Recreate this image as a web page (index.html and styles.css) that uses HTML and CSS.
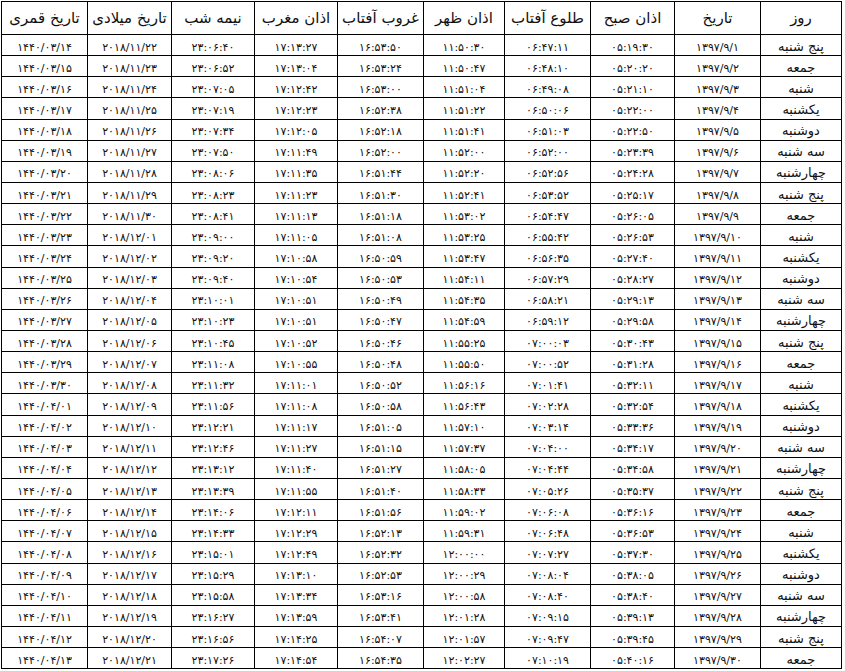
FILE: index.html
```html
<!DOCTYPE html>
<html lang="fa">
<head>
<meta charset="utf-8">
<title>اوقات شرعی</title>
<link rel="stylesheet" href="styles.css">
</head>
<body>
<table class="times" dir="rtl">
<colgroup>
<col class="c81"><col class="c86"><col class="c84"><col class="c86"><col class="c81"><col class="c86"><col class="c83"><col class="c83"><col class="c84"><col class="c86">
</colgroup>
<thead>
<tr class="head"><th>روز</th><th>تاریخ</th><th>اذان صبح</th><th>طلوع آفتاب</th><th>اذان ظهر</th><th>غروب آفتاب</th><th>اذان مغرب</th><th>نیمه شب</th><th>تاریخ میلادی</th><th>تاریخ قمری</th></tr>
</thead>
<tbody>
<tr><td class="day">پنج شنبه</td><td>۱۳۹۷/۹/۱</td><td>۰۵:۱۹:۳۰</td><td>۰۶:۴۷:۱۱</td><td>۱۱:۵۰:۳۰</td><td>۱۶:۵۳:۵۰</td><td>۱۷:۱۳:۲۷</td><td>۲۳:۰۶:۴۰</td><td>۲۰۱۸/۱۱/۲۲</td><td>۱۴۴۰/۰۳/۱۴</td></tr>
<tr><td class="day">جمعه</td><td>۱۳۹۷/۹/۲</td><td>۰۵:۲۰:۲۰</td><td>۰۶:۴۸:۱۰</td><td>۱۱:۵۰:۴۷</td><td>۱۶:۵۳:۲۴</td><td>۱۷:۱۳:۰۴</td><td>۲۳:۰۶:۵۲</td><td>۲۰۱۸/۱۱/۲۳</td><td>۱۴۴۰/۰۳/۱۵</td></tr>
<tr><td class="day">شنبه</td><td>۱۳۹۷/۹/۳</td><td>۰۵:۲۱:۱۰</td><td>۰۶:۴۹:۰۸</td><td>۱۱:۵۱:۰۴</td><td>۱۶:۵۳:۰۰</td><td>۱۷:۱۲:۴۲</td><td>۲۳:۰۷:۰۵</td><td>۲۰۱۸/۱۱/۲۴</td><td>۱۴۴۰/۰۳/۱۶</td></tr>
<tr><td class="day">یکشنبه</td><td>۱۳۹۷/۹/۴</td><td>۰۵:۲۲:۰۰</td><td>۰۶:۵۰:۰۶</td><td>۱۱:۵۱:۲۲</td><td>۱۶:۵۲:۳۸</td><td>۱۷:۱۲:۲۳</td><td>۲۳:۰۷:۱۹</td><td>۲۰۱۸/۱۱/۲۵</td><td>۱۴۴۰/۰۳/۱۷</td></tr>
<tr><td class="day">دوشنبه</td><td>۱۳۹۷/۹/۵</td><td>۰۵:۲۲:۵۰</td><td>۰۶:۵۱:۰۳</td><td>۱۱:۵۱:۴۱</td><td>۱۶:۵۲:۱۸</td><td>۱۷:۱۲:۰۵</td><td>۲۳:۰۷:۳۴</td><td>۲۰۱۸/۱۱/۲۶</td><td>۱۴۴۰/۰۳/۱۸</td></tr>
<tr><td class="day">سه شنبه</td><td>۱۳۹۷/۹/۶</td><td>۰۵:۲۳:۳۹</td><td>۰۶:۵۲:۰۰</td><td>۱۱:۵۲:۰۰</td><td>۱۶:۵۲:۰۰</td><td>۱۷:۱۱:۴۹</td><td>۲۳:۰۷:۵۰</td><td>۲۰۱۸/۱۱/۲۷</td><td>۱۴۴۰/۰۳/۱۹</td></tr>
<tr><td class="day">چهارشنبه</td><td>۱۳۹۷/۹/۷</td><td>۰۵:۲۴:۲۸</td><td>۰۶:۵۲:۵۶</td><td>۱۱:۵۲:۲۰</td><td>۱۶:۵۱:۴۴</td><td>۱۷:۱۱:۳۵</td><td>۲۳:۰۸:۰۶</td><td>۲۰۱۸/۱۱/۲۸</td><td>۱۴۴۰/۰۳/۲۰</td></tr>
<tr><td class="day">پنج شنبه</td><td>۱۳۹۷/۹/۸</td><td>۰۵:۲۵:۱۷</td><td>۰۶:۵۳:۵۲</td><td>۱۱:۵۲:۴۱</td><td>۱۶:۵۱:۳۰</td><td>۱۷:۱۱:۲۳</td><td>۲۳:۰۸:۲۳</td><td>۲۰۱۸/۱۱/۲۹</td><td>۱۴۴۰/۰۳/۲۱</td></tr>
<tr><td class="day">جمعه</td><td>۱۳۹۷/۹/۹</td><td>۰۵:۲۶:۰۵</td><td>۰۶:۵۴:۴۷</td><td>۱۱:۵۳:۰۲</td><td>۱۶:۵۱:۱۸</td><td>۱۷:۱۱:۱۳</td><td>۲۳:۰۸:۴۱</td><td>۲۰۱۸/۱۱/۳۰</td><td>۱۴۴۰/۰۳/۲۲</td></tr>
<tr><td class="day">شنبه</td><td>۱۳۹۷/۹/۱۰</td><td>۰۵:۲۶:۵۳</td><td>۰۶:۵۵:۴۲</td><td>۱۱:۵۳:۲۵</td><td>۱۶:۵۱:۰۸</td><td>۱۷:۱۱:۰۵</td><td>۲۳:۰۹:۰۰</td><td>۲۰۱۸/۱۲/۰۱</td><td>۱۴۴۰/۰۳/۲۳</td></tr>
<tr><td class="day">یکشنبه</td><td>۱۳۹۷/۹/۱۱</td><td>۰۵:۲۷:۴۰</td><td>۰۶:۵۶:۳۵</td><td>۱۱:۵۳:۴۷</td><td>۱۶:۵۰:۵۹</td><td>۱۷:۱۰:۵۸</td><td>۲۳:۰۹:۲۰</td><td>۲۰۱۸/۱۲/۰۲</td><td>۱۴۴۰/۰۳/۲۴</td></tr>
<tr><td class="day">دوشنبه</td><td>۱۳۹۷/۹/۱۲</td><td>۰۵:۲۸:۲۷</td><td>۰۶:۵۷:۲۹</td><td>۱۱:۵۴:۱۱</td><td>۱۶:۵۰:۵۳</td><td>۱۷:۱۰:۵۴</td><td>۲۳:۰۹:۴۰</td><td>۲۰۱۸/۱۲/۰۳</td><td>۱۴۴۰/۰۳/۲۵</td></tr>
<tr><td class="day">سه شنبه</td><td>۱۳۹۷/۹/۱۳</td><td>۰۵:۲۹:۱۳</td><td>۰۶:۵۸:۲۱</td><td>۱۱:۵۴:۳۵</td><td>۱۶:۵۰:۴۹</td><td>۱۷:۱۰:۵۱</td><td>۲۳:۱۰:۰۱</td><td>۲۰۱۸/۱۲/۰۴</td><td>۱۴۴۰/۰۳/۲۶</td></tr>
<tr><td class="day">چهارشنبه</td><td>۱۳۹۷/۹/۱۴</td><td>۰۵:۲۹:۵۸</td><td>۰۶:۵۹:۱۲</td><td>۱۱:۵۴:۵۹</td><td>۱۶:۵۰:۴۷</td><td>۱۷:۱۰:۵۱</td><td>۲۳:۱۰:۲۳</td><td>۲۰۱۸/۱۲/۰۵</td><td>۱۴۴۰/۰۳/۲۷</td></tr>
<tr><td class="day">پنج شنبه</td><td>۱۳۹۷/۹/۱۵</td><td>۰۵:۳۰:۴۳</td><td>۰۷:۰۰:۰۳</td><td>۱۱:۵۵:۲۵</td><td>۱۶:۵۰:۴۶</td><td>۱۷:۱۰:۵۲</td><td>۲۳:۱۰:۴۵</td><td>۲۰۱۸/۱۲/۰۶</td><td>۱۴۴۰/۰۳/۲۸</td></tr>
<tr><td class="day">جمعه</td><td>۱۳۹۷/۹/۱۶</td><td>۰۵:۳۱:۲۸</td><td>۰۷:۰۰:۵۲</td><td>۱۱:۵۵:۵۰</td><td>۱۶:۵۰:۴۸</td><td>۱۷:۱۰:۵۵</td><td>۲۳:۱۱:۰۸</td><td>۲۰۱۸/۱۲/۰۷</td><td>۱۴۴۰/۰۳/۲۹</td></tr>
<tr><td class="day">شنبه</td><td>۱۳۹۷/۹/۱۷</td><td>۰۵:۳۲:۱۱</td><td>۰۷:۰۱:۴۱</td><td>۱۱:۵۶:۱۶</td><td>۱۶:۵۰:۵۲</td><td>۱۷:۱۱:۰۱</td><td>۲۳:۱۱:۳۲</td><td>۲۰۱۸/۱۲/۰۸</td><td>۱۴۴۰/۰۳/۳۰</td></tr>
<tr><td class="day">یکشنبه</td><td>۱۳۹۷/۹/۱۸</td><td>۰۵:۳۲:۵۴</td><td>۰۷:۰۲:۲۸</td><td>۱۱:۵۶:۴۳</td><td>۱۶:۵۰:۵۸</td><td>۱۷:۱۱:۰۸</td><td>۲۳:۱۱:۵۶</td><td>۲۰۱۸/۱۲/۰۹</td><td>۱۴۴۰/۰۴/۰۱</td></tr>
<tr><td class="day">دوشنبه</td><td>۱۳۹۷/۹/۱۹</td><td>۰۵:۳۳:۳۶</td><td>۰۷:۰۳:۱۴</td><td>۱۱:۵۷:۱۰</td><td>۱۶:۵۱:۰۵</td><td>۱۷:۱۱:۱۷</td><td>۲۳:۱۲:۲۱</td><td>۲۰۱۸/۱۲/۱۰</td><td>۱۴۴۰/۰۴/۰۲</td></tr>
<tr><td class="day">سه شنبه</td><td>۱۳۹۷/۹/۲۰</td><td>۰۵:۳۴:۱۷</td><td>۰۷:۰۴:۰۰</td><td>۱۱:۵۷:۳۷</td><td>۱۶:۵۱:۱۵</td><td>۱۷:۱۱:۲۷</td><td>۲۳:۱۲:۴۶</td><td>۲۰۱۸/۱۲/۱۱</td><td>۱۴۴۰/۰۴/۰۳</td></tr>
<tr><td class="day">چهارشنبه</td><td>۱۳۹۷/۹/۲۱</td><td>۰۵:۳۴:۵۸</td><td>۰۷:۰۴:۴۴</td><td>۱۱:۵۸:۰۵</td><td>۱۶:۵۱:۲۷</td><td>۱۷:۱۱:۴۰</td><td>۲۳:۱۳:۱۲</td><td>۲۰۱۸/۱۲/۱۲</td><td>۱۴۴۰/۰۴/۰۴</td></tr>
<tr><td class="day">پنج شنبه</td><td>۱۳۹۷/۹/۲۲</td><td>۰۵:۳۵:۳۷</td><td>۰۷:۰۵:۲۶</td><td>۱۱:۵۸:۳۳</td><td>۱۶:۵۱:۴۰</td><td>۱۷:۱۱:۵۵</td><td>۲۳:۱۳:۳۹</td><td>۲۰۱۸/۱۲/۱۳</td><td>۱۴۴۰/۰۴/۰۵</td></tr>
<tr><td class="day">جمعه</td><td>۱۳۹۷/۹/۲۳</td><td>۰۵:۳۶:۱۶</td><td>۰۷:۰۶:۰۸</td><td>۱۱:۵۹:۰۲</td><td>۱۶:۵۱:۵۶</td><td>۱۷:۱۲:۱۱</td><td>۲۳:۱۴:۰۶</td><td>۲۰۱۸/۱۲/۱۴</td><td>۱۴۴۰/۰۴/۰۶</td></tr>
<tr><td class="day">شنبه</td><td>۱۳۹۷/۹/۲۴</td><td>۰۵:۳۶:۵۳</td><td>۰۷:۰۶:۴۸</td><td>۱۱:۵۹:۳۱</td><td>۱۶:۵۲:۱۳</td><td>۱۷:۱۲:۲۹</td><td>۲۳:۱۴:۳۳</td><td>۲۰۱۸/۱۲/۱۵</td><td>۱۴۴۰/۰۴/۰۷</td></tr>
<tr><td class="day">یکشنبه</td><td>۱۳۹۷/۹/۲۵</td><td>۰۵:۳۷:۳۰</td><td>۰۷:۰۷:۲۷</td><td>۱۲:۰۰:۰۰</td><td>۱۶:۵۲:۳۲</td><td>۱۷:۱۲:۴۹</td><td>۲۳:۱۵:۰۱</td><td>۲۰۱۸/۱۲/۱۶</td><td>۱۴۴۰/۰۴/۰۸</td></tr>
<tr><td class="day">دوشنبه</td><td>۱۳۹۷/۹/۲۶</td><td>۰۵:۳۸:۰۵</td><td>۰۷:۰۸:۰۴</td><td>۱۲:۰۰:۲۹</td><td>۱۶:۵۲:۵۳</td><td>۱۷:۱۳:۱۰</td><td>۲۳:۱۵:۲۹</td><td>۲۰۱۸/۱۲/۱۷</td><td>۱۴۴۰/۰۴/۰۹</td></tr>
<tr><td class="day">سه شنبه</td><td>۱۳۹۷/۹/۲۷</td><td>۰۵:۳۸:۴۰</td><td>۰۷:۰۸:۴۰</td><td>۱۲:۰۰:۵۸</td><td>۱۶:۵۳:۱۶</td><td>۱۷:۱۳:۳۴</td><td>۲۳:۱۵:۵۸</td><td>۲۰۱۸/۱۲/۱۸</td><td>۱۴۴۰/۰۴/۱۰</td></tr>
<tr><td class="day">چهارشنبه</td><td>۱۳۹۷/۹/۲۸</td><td>۰۵:۳۹:۱۳</td><td>۰۷:۰۹:۱۵</td><td>۱۲:۰۱:۲۸</td><td>۱۶:۵۳:۴۱</td><td>۱۷:۱۳:۵۹</td><td>۲۳:۱۶:۲۷</td><td>۲۰۱۸/۱۲/۱۹</td><td>۱۴۴۰/۰۴/۱۱</td></tr>
<tr><td class="day">پنج شنبه</td><td>۱۳۹۷/۹/۲۹</td><td>۰۵:۳۹:۴۵</td><td>۰۷:۰۹:۴۷</td><td>۱۲:۰۱:۵۷</td><td>۱۶:۵۴:۰۷</td><td>۱۷:۱۴:۲۵</td><td>۲۳:۱۶:۵۶</td><td>۲۰۱۸/۱۲/۲۰</td><td>۱۴۴۰/۰۴/۱۲</td></tr>
<tr><td class="day">جمعه</td><td>۱۳۹۷/۹/۳۰</td><td>۰۵:۴۰:۱۶</td><td>۰۷:۱۰:۱۹</td><td>۱۲:۰۲:۲۷</td><td>۱۶:۵۴:۳۵</td><td>۱۷:۱۴:۵۴</td><td>۲۳:۱۷:۲۶</td><td>۲۰۱۸/۱۲/۲۱</td><td>۱۴۴۰/۰۴/۱۳</td></tr>
</tbody>
</table>
</body>
</html>
```
FILE: styles.css
```css
html, body {
  margin: 0;
  padding: 0;
  background: #ffffff;
}

body {
  padding: 1px 0 0 1px;
  font-family: "DejaVu Sans", sans-serif;
  color: #000000;
}

.times {
  border-collapse: collapse;
  table-layout: fixed;
  width: 841px;
}

.c81 { width: 81px; }
.c83 { width: 83px; }
.c84 { width: 84px; }
.c86 { width: 86px; }

.times th,
.times td {
  border: 1px solid #000000;
  text-align: center;
  padding: 0;
  white-space: nowrap;
  overflow: hidden;
}

.times th {
  height: 32px;
  font-weight: normal;
  font-size: 15px;
  line-height: 16px;
  vertical-align: middle;
  color: #111111;
}

.times tbody tr {
  height: 21.15px;
}

.times td {
  font-size: 11px;
  line-height: 14px;
  padding-top: 5px;
  letter-spacing: 0.9px;
  vertical-align: middle;
  color: #111111;
}

.times td.day {
  font-size: 13px;
  letter-spacing: 0;
  padding-top: 3px;
}
```
